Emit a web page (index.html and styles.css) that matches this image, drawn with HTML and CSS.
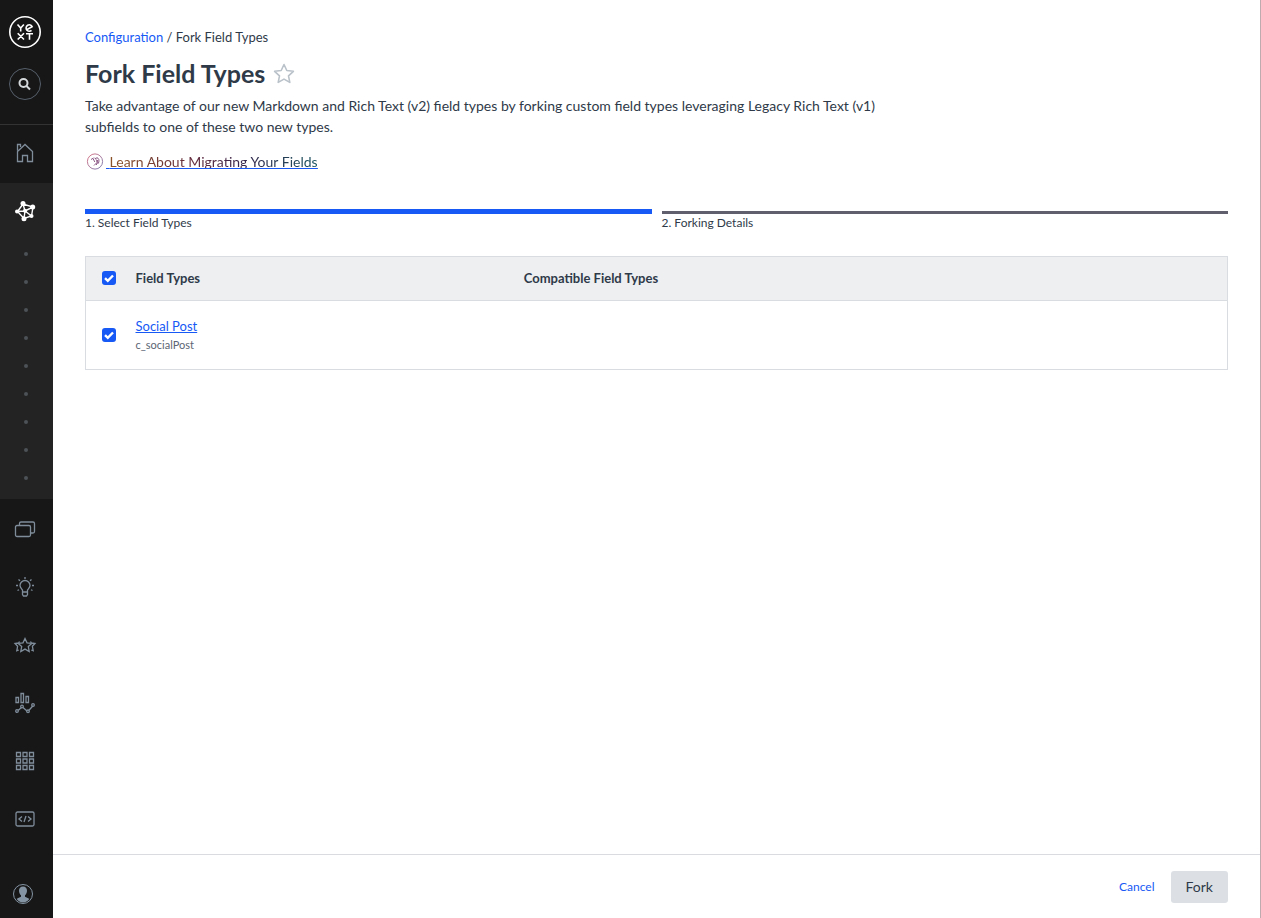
FILE: index.html
```html
<!DOCTYPE html>
<html lang="en">
<head>
<meta charset="utf-8">
<title>Fork Field Types</title>
<link rel="stylesheet" href="styles.css">
</head>
<body>
<div class="app">
  <nav class="sidebar" aria-label="Main">
    <div class="sidebar-top">
      <a class="logo" href="#" aria-label="Yext home">
        <svg width="32" height="32" viewBox="0 0 32 32" fill="none" stroke="#fff" stroke-width="1.6">
          <circle cx="16" cy="16" r="15.2"/>
          <path d="M8.500 8.500l3.200 3.500 3.200-3.500M11.700 12v3.500M8.700 17.200l6.300 6.300M15 17.200l-6.300 6.300M17 17.800h7M20.500 17.800v6M18 13.500l5.200-2.800a3.200 3.200 0 1 0-.7 3.600"/>
        </svg>
      </a>
      <button class="search" type="button" aria-label="Search">
        <svg width="14" height="14" viewBox="0 0 14 14" fill="none" stroke="#d5d8db" stroke-width="2"><circle cx="5.500" cy="6" r="4"/><path d="M8.500 9l3.500 3.500"/></svg>
      </button>
    </div>
    <a class="nav-item" href="#" aria-label="Home">
      <svg class="icon" width="22" height="22" viewBox="0 0 22 22"><path d="M3.500 7.500V1.500h3v2.500M3.500 8.500V18.500h5v-6h5v6h5V8.500L11 1.500z"/></svg>
    </a>
    <div class="nav-section">
      <a class="nav-item" href="#" aria-label="Knowledge Graph">
        <svg width="22" height="22" viewBox="0 1 22 22" fill="none" stroke="#fff" stroke-width="1.400"><path d="M9 4L3.500 11.500 10 18.500 17.500 16 19 7zM9 4l2 7 8-4M3.500 11.500L11 11l6.500 5M11 11l-1 7.500"/><g fill="#fff" stroke="none"><circle cx="9" cy="3.500" r="2.500"/><circle cx="3" cy="11.500" r="2"/><circle cx="10" cy="18.800" r="2.500"/><circle cx="17.500" cy="16" r="2"/><circle cx="18.700" cy="7" r="2.500"/><circle cx="11" cy="10.800" r="2"/></g></svg>
      </a>
      <div class="dots">
        <a class="dot" href="#" aria-label="Entities"></a>
        <a class="dot" href="#" aria-label="Suggestions"></a>
        <a class="dot" href="#" aria-label="Activity"></a>
        <a class="dot" href="#" aria-label="Media"></a>
        <a class="dot" href="#" aria-label="Connectors"></a>
        <a class="dot" href="#" aria-label="Duplicates"></a>
        <a class="dot" href="#" aria-label="Folders"></a>
        <a class="dot" href="#" aria-label="Labels"></a>
        <a class="dot" href="#" aria-label="Configuration"></a>
      </div>
    </div>
    <a class="nav-item" href="#" aria-label="Pages">
      <svg class="icon" width="22" height="22" viewBox="0 0 22 22"><rect x="1.500" y="7.500" width="15" height="11" rx="1.500"/><path d="M5.500 7V5.500A1.500 1.500 0 0 1 7 4h12a1.500 1.500 0 0 1 1.500 1.500v8A1.500 1.500 0 0 1 19 15h-2"/></svg>
    </a>
    <a class="nav-item" href="#" aria-label="Search insights">
      <svg class="icon" width="22" height="22" viewBox="0 0 22 22"><path d="M8.500 16v-2C7.500 12.500 6 11.500 6 9.500a5 5 0 0 1 10 0c0 2-1.500 3-2.500 4.500v2zM8.500 16v2.500l1 1.500h3l1-1.500V16M11 1v2M4.500 3.500l1.500 1.300M17.500 3.500L16 4.800M2 9.500h2M18 9.500h2M3.500 14.500l1.500-.8M18.500 14.500l-1.500-.8"/></svg>
    </a>
    <a class="nav-item" href="#" aria-label="Reviews">
      <svg class="icon" width="24" height="22" viewBox="0 0 24 22"><path d="M12 4.500l2 4.300 4.800.6-3.500 3.200.9 4.900-4.200-2.400-4.200 2.400.9-4.900-3.500-3.200 4.800-.6zM6.500 7.500L5.500 9 2 9.500l2.600 2.800-.8 4.500 2-.8M17.500 7.500l1 1.500 3.500.5-2.600 2.800.8 4.500-2-.8"/></svg>
    </a>
    <a class="nav-item" href="#" aria-label="Analytics">
      <svg class="icon" width="22" height="22" viewBox="0 0 22 22"><path d="M2 5.500h2.500v5H2zM7 1.500h2.500v9H7zM12 4.500h2.500v6H12zM4 18.500l3.500-3M9 15.500l4 3.500M15 18.300l3.800-4.300"/><circle cx="3" cy="19" r="1.300"/><circle cx="8" cy="14.500" r="1.300"/><circle cx="14" cy="19.300" r="1.300"/><circle cx="19" cy="13" r="1.300"/></svg>
    </a>
    <a class="nav-item" href="#" aria-label="Apps">
      <svg class="icon" width="22" height="22" viewBox="0 0 22 22"><path d="M2.500 2.500h4v4h-4zM9 2.500h4v4H9zM15.500 2.500h4v4h-4zM2.500 9h4v4h-4zM9 9h4v4H9zM15.500 9h4v4h-4zM2.500 15.500h4v4h-4zM9 15.500h4v4H9zM15.500 15.500h4v4h-4z"/></svg>
    </a>
    <a class="nav-item" href="#" aria-label="Developer">
      <svg class="icon" width="22" height="22" viewBox="0 0 22 22"><rect x="2" y="4" width="18" height="14" rx="1.500"/><path d="M8 8.500L5 11l3 2.500M14 8.500l3 2.500-3 2.500M12 8l-2 6"/></svg>
    </a>
    <button class="avatar" type="button" aria-label="Account">
      <svg width="22" height="22" viewBox="0 0 22 22"><circle cx="11" cy="11" r="9.500" fill="none" stroke="#8494a3"/><path fill="#8494a3" d="M11 3.500c-2.600 0-4 1.700-4 4.200 0 1.900.8 3.500 2 4.500v1.600c-1.300.9-3 1.100-4.300 2.200A8.500 8.500 0 0 0 11 19.500a8.500 8.500 0 0 0 6.300-3.500c-1.300-1.100-3-1.300-4.300-2.200v-1.600c1.200-1 2-2.600 2-4.500 0-2.500-1.400-4.200-4-4.200z"/></svg>
    </button>
  </nav>
  <div class="page">
    <main class="content">
      <nav class="breadcrumb" aria-label="Breadcrumb"><a href="#">Configuration</a> / <span>Fork Field Types</span></nav>
      <div class="title-row">
        <h1>Fork Field Types</h1>
        <button class="favorite" type="button" aria-label="Add to favorites">
          <svg width="22" height="22" viewBox="0 0 22 22" fill="none" stroke="#b9c1c9" stroke-width="1.600" stroke-linejoin="round"><path d="M11 2.500l2.800 6 6.600.8-4.900 4.500 1.300 6.600-5.800-3.300-5.800 3.300 1.300-6.600L1.600 9.300l6.600-.8z"/></svg>
        </button>
      </div>
      <p class="description">Take advantage of our new Markdown and Rich Text (v2) field types by forking custom field types leveraging Legacy Rich Text (v1) subfields to one of these two new types.</p>
      <a class="learn" href="#">
        <svg width="18" height="18" viewBox="0 0 18 18" fill="none">
          <defs><linearGradient id="badge" x1="0" y1="0" x2="1" y2="1"><stop offset="0" stop-color="#d05468"/><stop offset="1" stop-color="#5b5b9e"/></linearGradient></defs>
          <circle cx="9" cy="8.500" r="7.600" stroke="url(#badge)" stroke-width=".8"/>
          <path d="M5 6.500l2.500-1.500M7 5.500l1.800 3.500M8.500 5l2.300 1M10.500 4.500c2.500.5 3 3 2 5.500M9.800 6.500c1.500 1.500 1.500 3.500.5 5.500M8 12.500l2.500-2.500M11.500 7l.5 4" stroke="#8d5a87"/>
        </svg>
        <span class="learn-line">&nbsp;<span class="learn-text">Learn About Migrating Your Fields</span></span>
      </a>
      <ol class="steps">
        <li class="step step-active">1. Select Field Types</li>
        <li class="step">2. Forking Details</li>
      </ol>
      <table class="fields">
        <thead>
          <tr>
            <th class="check-cell"><input class="check" type="checkbox" aria-label="Select all field types" checked></th>
            <th class="name-cell" scope="col">Field Types</th>
            <th scope="col">Compatible Field Types</th>
          </tr>
        </thead>
        <tbody>
          <tr>
            <td class="check-cell"><input class="check" type="checkbox" aria-label="Select Social Post" checked></td>
            <td class="name-cell"><a href="#">Social Post</a><div class="field-id">c_socialPost</div></td>
            <td></td>
          </tr>
        </tbody>
      </table>
    </main>
    <footer class="footer">
      <button class="cancel" type="button">Cancel</button>
      <button class="fork" type="button">Fork</button>
    </footer>
  </div>
</div>
</body>
</html>
```

FILE: styles.css
```css
* {
  box-sizing: border-box;
}

body {
  margin: 0;
  background: #fff;
  color: #2f3a49;
  font: 14px/20px Lato, sans-serif;
}

a {
  color: #1659f5;
}

button {
  padding: 0;
  border: 0;
  background: none;
  color: inherit;
  font: inherit;
  cursor: pointer;
}

svg {
  display: block;
}

.app {
  display: flex;
  min-height: 100vh;
}

.sidebar {
  display: flex;
  flex: none;
  flex-direction: column;
  width: 53px;
  background: #171717;
}

.sidebar-top {
  display: flex;
  flex-direction: column;
  gap: 20px;
  padding: 16px 9px 24px;
  border-bottom: 1px solid #333;
}

.search {
  display: grid;
  place-items: center;
  width: 32px;
  height: 32px;
  border: 1px solid #56606b;
  border-radius: 50%;
}

.nav-item {
  display: grid;
  place-items: center;
  height: 58px;
  padding-right: 3px;
}

.nav-section {
  margin-bottom: 1px;
  background: #232323;
}

.icon {
  fill: none;
  stroke: #7f8d9b;
  stroke-width: 1.3;
}

.dots {
  margin-top: -1px;
  padding: 0 1px 7px 0;
}

.dot {
  display: grid;
  place-items: center;
  height: 28px;
}

.dot::before {
  width: 4px;
  height: 4px;
  border-radius: 50%;
  background: #4c5258;
  content: "";
}

.avatar {
  margin: auto 0 13px 12px;
  width: 22px;
}

.page {
  display: flex;
  flex: 1;
  flex-direction: column;
  min-width: 0;
  border-right: 1px solid #bdabaf;
}

.content {
  flex: 1;
  padding: 27px 32px;
}

.breadcrumb {
  font-size: 13px;
}

.breadcrumb a {
  text-decoration: none;
}

.title-row {
  display: flex;
  align-items: center;
  gap: 8px;
  margin-top: 10px;
}

h1 {
  margin: 0;
  font-size: 25px;
  line-height: 32px;
}

.description {
  max-width: 800px;
  margin: 6px 0 15px;
  font-size: 14px;
  line-height: 21px;
}

.learn {
  display: flex;
  align-items: center;
  gap: 2px;
  width: fit-content;
  text-decoration: none;
}

.learn svg {
  margin-left: 1px;
}

.learn-line {
  text-decoration: underline 1px #1659f5;
  text-decoration-skip-ink: none;
}

.learn-text {
  background: linear-gradient(90deg, #8a5228, #632b3d 40%, #34264c 65%, #17535e);
  background-clip: text;
  color: transparent;
}

.steps {
  display: grid;
  grid-template-columns: 1fr 1fr;
  gap: 10px;
  align-items: end;
  margin: 37px 0 24px;
  padding: 0;
  list-style: none;
}

.step {
  border-top: 3px solid #605f6d;
  font-size: 12px;
  line-height: 18px;
}

.step-active {
  border-top: 5px solid #1659f5;
}

.fields {
  width: 100%;
  border: 1px solid #d9dde2;
  border-collapse: collapse;
  table-layout: fixed;
  font-size: 13px;
}

.fields th,
.fields td {
  padding: 0 0 1px;
  text-align: left;
}

.fields thead {
  border-bottom: 1px solid #d9dde2;
  background: #edeff1;
}

.fields th {
  height: 44px;
}

.fields td {
  height: 69px;
}

.fields .check-cell {
  width: 50px;
  padding-left: 16px;
}

.fields .name-cell {
  width: 34%;
}

.check {
  display: block;
  appearance: none;
  width: 14px;
  height: 14px;
  margin: 0;
  border-radius: 3px;
  background: #1659f5;
}

.check:checked {
  background-image: url("data:image/svg+xml,%3Csvg xmlns='http://www.w3.org/2000/svg' viewBox='0 0 14 14'%3E%3Cpath d='M3 7.200l2.800 2.700L11 4.500' fill='none' stroke='white' stroke-width='2.400'/%3E%3C/svg%3E");
}

.field-id {
  color: #5b6573;
  font-size: 11px;
  line-height: 17px;
}

.footer {
  display: flex;
  align-items: center;
  justify-content: flex-end;
  gap: 16px;
  padding: 16px 32px 15px;
  border-top: 1px solid #dadbe0;
}

.cancel {
  color: #1659f5;
  font-size: 12px;
}

.fork {
  height: 32px;
  padding: 0 15px;
  border-radius: 3px;
  background: #dce0e4;
}
```
